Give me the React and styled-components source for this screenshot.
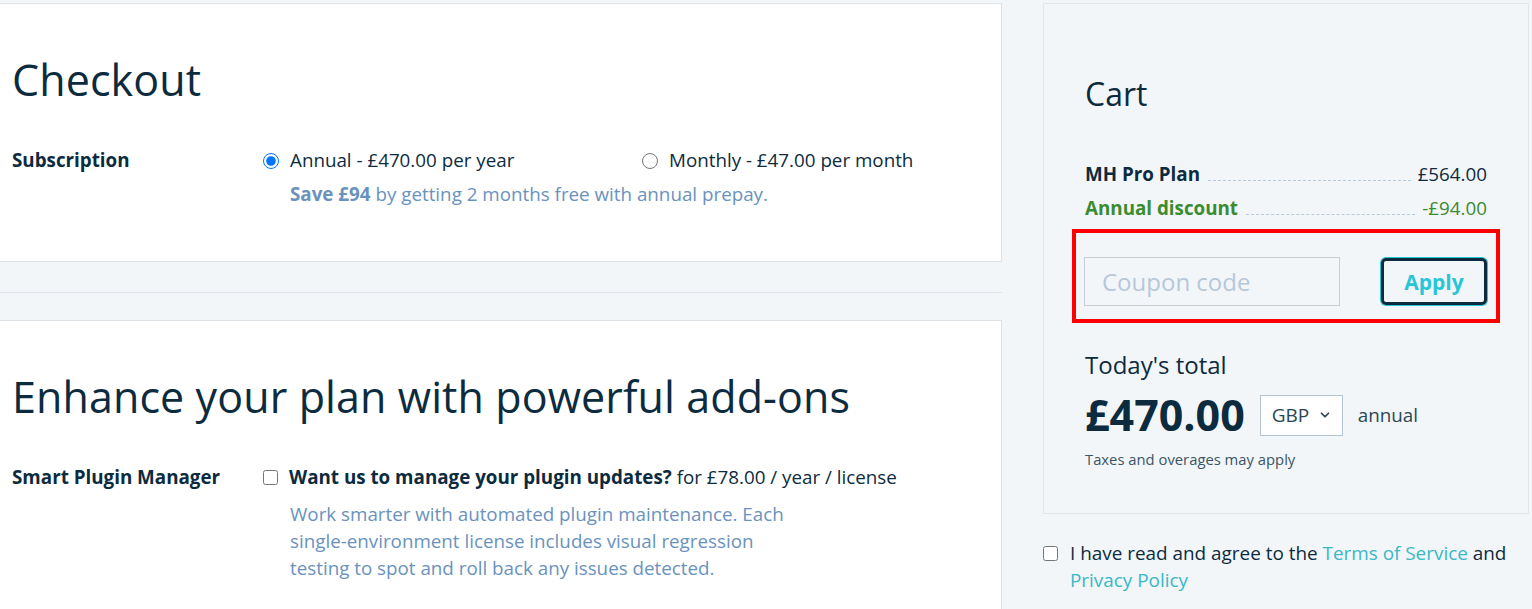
import React from 'react'
import styled, { createGlobalStyle } from 'styled-components'
import { ChevronDown } from 'lucide-react'

const GlobalStyle = createGlobalStyle`
    body {
        margin: 0;
        background: #f3f6f9;
        font-family: "Open Sans", "Liberation Sans", sans-serif;
        color: #0d2b3e;
        overflow: hidden;
    }
`

const App = () => {
    return (
        <Page>
            <GlobalStyle />
            <MainColumn>
                <Card>
                    <Heading>Checkout</Heading>
                    <OptionRow>
                        <RowLabel>Subscription</RowLabel>
                        <div>
                            <Choices>
                                <Choice width="379px">
                                    <Radio type="radio" name="plan" defaultChecked />
                                    Annual - £470.00 per year
                                </Choice>
                                <Choice>
                                    <Radio type="radio" name="plan" />
                                    Monthly - £47.00 per month
                                </Choice>
                            </Choices>
                            <Hint><b>Save £94</b> by getting 2 months free with annual prepay.</Hint>
                        </div>
                    </OptionRow>
                </Card>

                <Divider />

                <Card tall>
                    <Heading>Enhance your plan with powerful add-ons</Heading>
                    <OptionRow>
                        <RowLabel>Smart Plugin Manager</RowLabel>
                        <div>
                            <Choice>
                                <Check type="checkbox" />
                                <span><b>Want us to manage your plugin updates?</b> for £78.00 / year / license</span>
                            </Choice>
                            <Hint narrow>
                                Work smarter with automated plugin maintenance. Each single-environment license includes visual regression testing to spot and roll back any issues detected.
                            </Hint>
                        </div>
                    </OptionRow>
                </Card>
            </MainColumn>

            <SideColumn>
                <CartPanel>
                    <CartTitle>Cart</CartTitle>
                    <LineItem>
                        <ItemName>MH Pro Plan</ItemName>
                        <Leader />
                        <ItemPrice>£564.00</ItemPrice>
                    </LineItem>
                    <LineItem discount>
                        <ItemName>Annual discount</ItemName>
                        <Leader />
                        <ItemPrice>-£94.00</ItemPrice>
                    </LineItem>

                    <Highlight>
                        <CouponInput placeholder="Coupon code" />
                        <ApplyButton>Apply</ApplyButton>
                    </Highlight>

                    <TotalLabel>Today's total</TotalLabel>
                    <TotalRow>
                        <TotalAmount>£470.00</TotalAmount>
                        <CurrencySelect>
                            GBP
                            <ChevronDown size={14} strokeWidth={3} />
                        </CurrencySelect>
                        <Period>annual</Period>
                    </TotalRow>
                    <SmallPrint>Taxes and overages may apply</SmallPrint>
                </CartPanel>

                <Agree>
                    <Check type="checkbox" />
                    <span>I have read and agree to the <TextLink href="#">Terms of Service</TextLink> and <TextLink href="#">Privacy Policy</TextLink></span>
                </Agree>
            </SideColumn>
        </Page>
    )
}

export default App

const Page = styled.div`
    display: flex;
    align-items: flex-start;
    gap: 41px;
    padding-top: 3px;
    height: 606px;
    overflow: hidden;
`

const MainColumn = styled.div`
    width: 1003px;
    margin-left: -1px;
    flex-shrink: 0;
`

const Card = styled.section`
    background: #fff;
    border: 1px solid #dde2e7;
    padding: 45px 12px 0 12px;
    height: ${props => props.tall ? '320px' : '259px'};
    box-sizing: border-box;
`

const Heading = styled.h1`
    margin: 0 0 36px 0;
    font-size: 43px;
    font-weight: 400;
    line-height: 62px;
    letter-spacing: 0.1px;
`

const OptionRow = styled.div`
    display: flex;
    font-size: 18.8px;
    line-height: 27px;
`

const RowLabel = styled.div`
    width: 251px;
    flex-shrink: 0;
    font-weight: 700;
`

const Choices = styled.div`
    display: flex;
`

const Choice = styled.label`
    display: flex;
    align-items: center;
    gap: 11px;
    width: ${props => props.width || 'auto'};
    b {
        font-weight: 700;
    }
`

const Radio = styled.input`
    margin: 0;
    width: 16px;
    height: 16px;
    accent-color: #0075ff;
`

const Check = styled.input`
    margin: 0;
    width: 15px;
    height: 15px;
    flex-shrink: 0;
`

const Hint = styled.p`
    margin: ${props => props.narrow ? '10px' : '7px'} 0 0 27px;
    max-width: ${props => props.narrow ? '505px' : 'none'};
    color: #6a92bd;
    b {
        font-weight: 700;
    }
`

const Divider = styled.hr`
    border: none;
    border-top: 1px solid #dfe5ea;
    margin: 30px 0 27px 0;
`

const SideColumn = styled.div`
    width: 486px;
    flex-shrink: 0;
`

const CartPanel = styled.aside`
    border: 1px solid #e1e6eb;
    background: #f3f6f9;
    padding: 68px 41px 0 41px;
    height: 511px;
    box-sizing: border-box;
`

const CartTitle = styled.h2`
    margin: 0 0 41px 0;
    font-size: 32px;
    font-weight: 400;
    line-height: 44px;
`

const LineItem = styled.div`
    display: flex;
    align-items: baseline;
    font-size: 18.8px;
    line-height: 34px;
    color: ${props => props.discount ? '#3b8b2f' : '#0d2b3e'};
`

const ItemName = styled.span`
    font-weight: 700;
`

const Leader = styled.span`
    flex: 1;
    margin: 0 7px 0 8px;
    border-bottom: 1px dashed #b3cce4;
`

const ItemPrice = styled.span`
    font-weight: 400;
`

const Highlight = styled.div`
    display: flex;
    justify-content: space-between;
    align-items: center;
    margin: 4px -13px 0 -13px;
    padding: 24px 9px 13px 8px;
    border: 4px solid #ff0000;
`

const CouponInput = styled.input`
    width: 256px;
    height: 49px;
    box-sizing: border-box;
    border: 1px solid #c9ced3;
    background: #f3f6f9;
    padding: 0 17px;
    font-family: "Open Sans", "Liberation Sans", sans-serif;
    font-size: 24px;
    color: #0d2b3e;
    outline: none;
    &::placeholder {
        color: #b5c8da;
    }
`

const ApplyButton = styled.button`
    width: 106px;
    height: 47px;
    border: 3px solid #0d2b3e;
    border-radius: 5px;
    box-shadow: 0 0 0 1px #27c6d6;
    background: transparent;
    color: #27c6d6;
    font-family: "Open Sans", "Liberation Sans", sans-serif;
    font-size: 21px;
    font-weight: 700;
    cursor: pointer;
`

const TotalLabel = styled.div`
    margin-top: 26px;
    font-size: 24px;
    line-height: 32px;
`

const TotalRow = styled.div`
    display: flex;
    align-items: center;
    gap: 15px;
    margin-top: 9px;
`

const TotalAmount = styled.div`
    font-size: 43px;
    font-weight: 700;
    line-height: 50px;
`

const CurrencySelect = styled.div`
    display: flex;
    align-items: center;
    justify-content: space-between;
    width: 83px;
    height: 41px;
    box-sizing: border-box;
    padding: 0 10px 0 11px;
    border: 1px solid #b4c6d6;
    background: #fff;
    font-size: 19px;
    color: #2a4656;
`

const Period = styled.span`
    font-size: 18.8px;
    color: #2a4656;
`

const SmallPrint = styled.div`
    margin-top: 9px;
    font-size: 14.8px;
    color: #3a5566;
`

const Agree = styled.label`
    display: flex;
    align-items: flex-start;
    gap: 12px;
    margin-top: 26px;
    font-size: 18.9px;
    line-height: 27px;
    input {
        margin-top: 6px;
    }
`

const TextLink = styled.a`
    color: #3ab8c6;
    text-decoration: none;
`
